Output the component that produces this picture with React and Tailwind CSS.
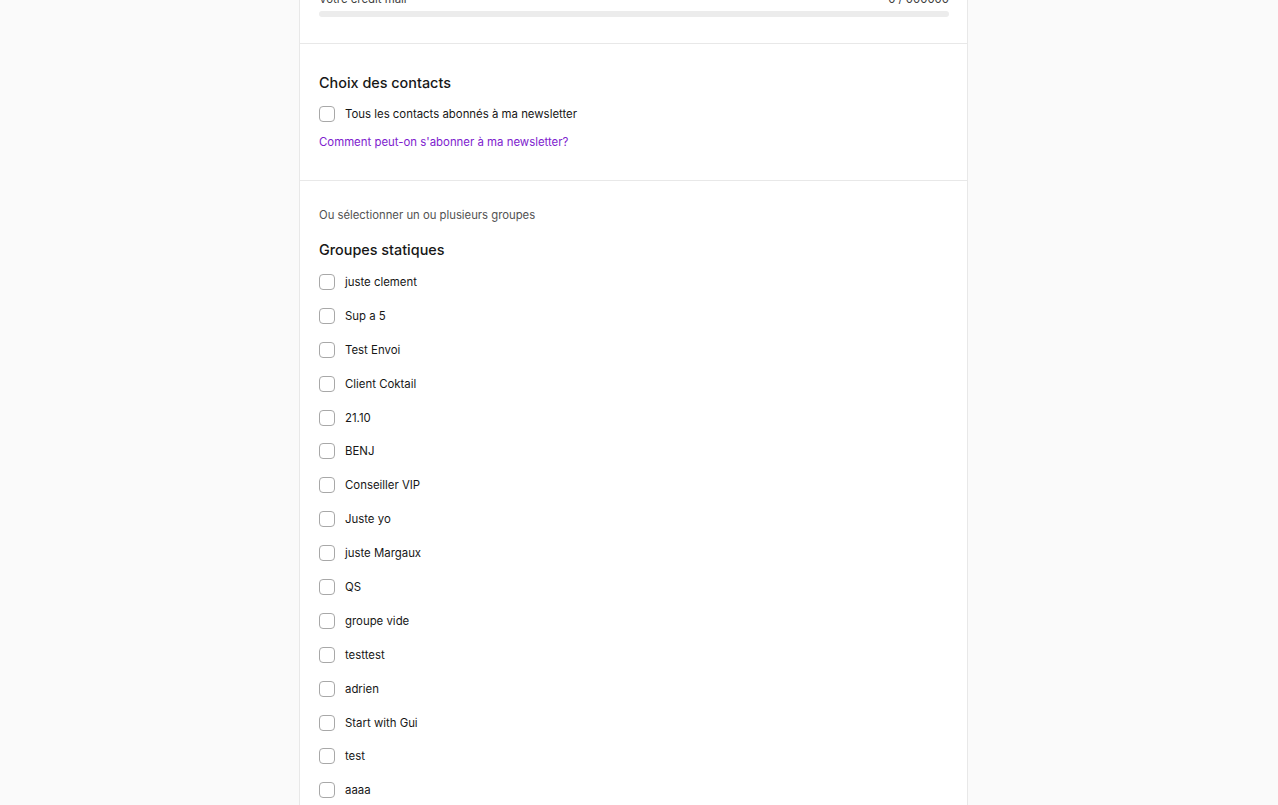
const groups = [
  "juste clement",
  "Sup a 5",
  "Test Envoi",
  "Client Coktail",
  "21.10",
  "BENJ",
  "Conseiller VIP",
  "Juste yo",
  "juste Margaux",
  "QS",
  "groupe vide",
  "testtest",
  "adrien",
  "Start with Gui",
  "test",
  "aaaa",
  "clients",
];

function Check({ label }) {
  return (
    <label className="flex items-center gap-[10px] h-5 cursor-pointer">
      <span className="w-4 h-4 rounded-[4px] border border-[#a8a8a8] bg-white shrink-0" />
      <span className="text-[11.4px] leading-5 text-[#171717]">{label}</span>
    </label>
  );
}

export default function App() {
  return (
    <div
      className="min-h-screen h-[805px] overflow-hidden bg-[#fafafa] flex justify-center pr-[11px]"
      style={{ fontFamily: "Inter, 'Noto Sans', sans-serif" }}
    >
      <div className="w-[669px] bg-white border-x border-[#e8e8e8] -mt-[11px] self-start">
        <div className="pl-[19px] pr-[18px] pb-[26px] border-b border-[#e8e8e8]">
          <div className="flex justify-between text-[11.4px] leading-5 text-[#404040]">
            <span>Votre crédit mail</span>
            <span>0 / 000000</span>
          </div>
          <div className="mt-[2px] h-[6px] rounded-full bg-[#ececec]" />
        </div>

        <div className="px-[19px] pt-[25px] pb-[28px] border-b border-[#e8e8e8]">
          <h2 className="text-[14.4px] leading-7 font-medium text-[#171717]">Choix des contacts</h2>
          <div className="mt-[7px]">
            <Check label="Tous les contacts abonnés à ma newsletter" />
          </div>
          <a href="#" className="block mt-2 text-[11.4px] leading-5 text-[#7e22ce]">
            Comment peut-on s'abonner à ma newsletter?
          </a>
        </div>

        <div className="px-[19px] pt-6 pb-10">
          <p className="text-[11.3px] leading-5 text-[#525252]">Ou sélectionner un ou plusieurs groupes</p>
          <h2 className="mt-[11px] text-[14.4px] leading-7 font-medium text-[#171717]">Groupes statiques</h2>
          <div className="mt-2 flex flex-col gap-[13.9px]">
            {groups.map((g) => (
              <Check key={g} label={g} />
            ))}
          </div>
        </div>
      </div>
    </div>
  );
}
